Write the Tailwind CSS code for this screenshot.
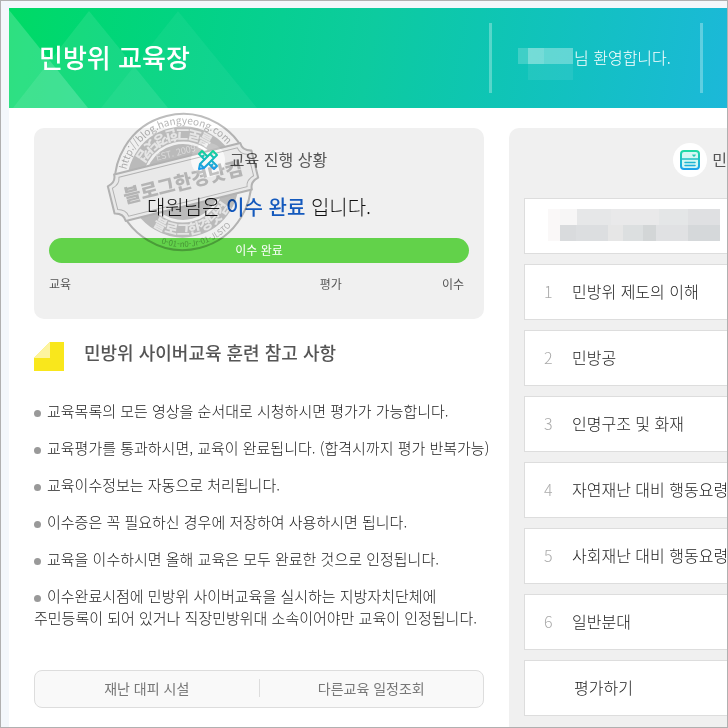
<!DOCTYPE html>
<html lang="ko">

<head>
    <meta charset="UTF-8">
    <meta name="viewport" content="width=device-width, initial-scale=1.0">
    <title>민방위 교육장</title>
    <script src="https://cdn.jsdelivr.net/npm/@tailwindcss/browser@4"></script>
</head>

<body class="font-['Noto_Sans_CJK_KR',sans-serif] bg-white text-[#222] overflow-x-hidden">
    <div class="min-h-screen border border-[#b0b0b0] bg-[#f3f7fb] pt-[7px] pl-2 flex flex-col overflow-hidden">
        <header class="relative h-[100px] shrink-0 flex items-center text-white bg-linear-100 from-[#00da64] via-[#0dcb9f] to-[#1cb8d9]">
            <svg class="absolute left-0 top-0" width="260" height="100" viewBox="0 0 260 100" fill="#fff" aria-hidden="true">
                <path d="M0 2L79 100H0z" fill-opacity=".18" />
                <path d="M80 3L159 100H4z" fill-opacity=".09" />
                <path d="M169 3L248 100H92z" fill-opacity=".05" />
            </svg>
            <h1 class="relative pl-[30px] pb-[2px] text-[26px] leading-[38px] font-medium whitespace-nowrap">민방위 교육장</h1>
            <div class="ml-auto mr-6 w-[214px] h-[70px] shrink-0 border-x-3 border-white/30 flex items-center pl-[26px]">
                <svg class="mt-3" width="55" height="32" viewBox="0 0 55 32" fill="#fff" aria-hidden="true">
                    <path d="M0 0h10v16H0z" fill-opacity=".2" />
                    <path d="M10 0h16v16H10z" fill-opacity=".42" />
                    <path d="M26 0h29v16H26z" fill-opacity=".34" />
                    <path d="M10 16h45v16H10z" fill-opacity=".08" />
                </svg>
                <p class="pl-px pb-[2px] text-base leading-6 font-light whitespace-nowrap">님 환영합니다.</p>
            </div>
        </header>

        <main class="grow flex gap-[25px] pl-[25px] pt-5 bg-white">
            <div class="w-[450px] shrink-0">
                <section class="relative rounded-[10px] bg-[#f0f0f0] px-[15px] pt-[15px] pb-6 h-[191px]">
                    <div class="flex items-center justify-center gap-[5px] h-[34px]">
                        <span class="size-[34px] rounded-full bg-white flex items-center justify-center">
                            <svg class="relative z-10" width="22" height="22" viewBox="0 0 22 22" fill="none" stroke="url(#tool)" stroke-width="2" stroke-linejoin="round" aria-hidden="true">
                                <defs>
                                    <linearGradient id="tool" x1="0" y1="0" x2="0" y2="22" gradientUnits="userSpaceOnUse">
                                        <stop stop-color="#10dc90" />
                                        <stop offset="1" stop-color="#1c92f2" />
                                    </linearGradient>
                                </defs>
                                <path d="M8 11L2 5l3-3 6 6M14 11l6 6-3 3-6-6M5 8l2-2M14 17l2-2" />
                                <path d="M16 2l4 4L7 19l-5 1 1-5zM13 5l4 4M3 15l4 4" />
                            </svg>
                        </span>
                        <h2 class="pb-[2px] text-base leading-6 text-[#555]">교육 진행 상황</h2>
                    </div>
                    <p class="mt-[15px] text-xl leading-[30px] font-light text-center text-[#111]">대원님은 <strong class="font-medium text-[#1459bd]">이수 완료</strong> 입니다.</p>
                    <div class="mt-4 h-[25px] rounded-full bg-[#62d24a] text-xs leading-[24px] text-white text-center">이수 완료</div>
                    <div class="mt-3 flex gap-[100px] pr-[5px] text-xs leading-[18px] text-[#555]">
                        <span class="mr-auto">교육</span>
                        <span>평가</span>
                        <span>이수</span>
                    </div>

                    <!-- 블로그 스탬프 -->
                    <svg class="absolute left-[70px] top-[-18px] mix-blend-multiply" width="158" height="144" viewBox="-79 -72 158 144" fill="none" stroke="#bdbdbd" aria-hidden="true">
                        <defs>
                            <path id="arcUrl" d="M-58 0A58 58 0 0 1 58 0" />
                            <path id="arcTop" d="M53 0A53 53 0 0 0 -53 0" />
                            <path id="arcBottom" d="M-53 0A53 53 0 0 0 53 0" />
                            <path id="arcLow" d="M-65 0A65 65 0 0 0 65 0" />
                        </defs>
                        <g transform="rotate(-14)">
                            <circle r="68" stroke-width="2" />
                            <circle r="48" stroke="#c6c6c6" stroke-width="15" />
                            <circle r="38" fill="#c6c6c6" stroke="none" />
                            <g stroke="none" text-anchor="middle">
                                <text font-size="10" fill="#b5b5b5"><textPath href="#arcUrl" startOffset="50%">http://blog.hangyeong.com</textPath></text>
                                <text font-size="14" font-weight="900" fill="#f4f4f4"><textPath href="#arcTop" startOffset="50%">블로그한경닷컴</textPath></text>
                                <text font-size="14" font-weight="900" fill="#f4f4f4"><textPath href="#arcBottom" startOffset="50%">블로그한경닷컴</textPath></text>
                                <text font-size="8" fill="#b5b5b5"><textPath href="#arcLow" startOffset="50%">0-01-n0-Jr-01-JLSTO</textPath></text>
                                <text font-size="9" fill="#e8e8e8" y="-27">EST. 2009</text>
                            </g>
                            <path d="M-65 -24H65Q65 -16 74 -14V14Q65 16 65 24H-65Q-65 16 -74 14V-14Q-65 -16 -65 -24z" fill="#f0f0f0" stroke="none" style="mix-blend-mode: normal" />
                            <path d="M-65 -24H65Q65 -16 74 -14V14Q65 16 65 24H-65Q-65 16 -74 14V-14Q-65 -16 -65 -24z" fill="#fff" fill-opacity=".5" stroke-width="2" stroke-linejoin="round" />
                            <path d="M-61 -20H61Q62 -13 70 -11V11Q62 13 61 20H-61Q-62 13 -70 11V-11Q-62 -13 -61 -20z" />
                            <text font-size="19" font-weight="900" fill="#c0c0c0" stroke="none" text-anchor="middle" y="7">블로그한경닷컴</text>
                        </g>
                    </svg>
                </section>

                <section>
                    <div class="mt-5 flex items-start gap-5">
                        <svg class="mt-[3px]" width="30" height="29" viewBox="0 0 30 29" aria-hidden="true">
                            <path d="M0 16L16 0h14v29H0z" fill="#f9e71c" />
                            <path d="M0 16L16 0v16z" fill="#fdf4a0" />
                        </svg>
                        <h2 class="text-lg leading-[26px] font-medium text-[#555]">민방위 사이버교육 훈련 참고 사항</h2>
                    </div>
                    <ul class="mt-[29px] space-y-[15px] text-[15px] leading-[22px] font-light whitespace-nowrap">
                        <li><span class="inline-block size-[7px] rounded-full bg-[#999] mr-[6px]"></span>교육목록의 모든 영상을 순서대로 시청하시면 평가가 가능합니다.</li>
                        <li><span class="inline-block size-[7px] rounded-full bg-[#999] mr-[6px]"></span>교육평가를 통과하시면, 교육이 완료됩니다. (합격시까지 평가 반복가능)</li>
                        <li><span class="inline-block size-[7px] rounded-full bg-[#999] mr-[6px]"></span>교육이수정보는 자동으로 처리됩니다.</li>
                        <li><span class="inline-block size-[7px] rounded-full bg-[#999] mr-[6px]"></span>이수증은 꼭 필요하신 경우에 저장하여 사용하시면 됩니다.</li>
                        <li><span class="inline-block size-[7px] rounded-full bg-[#999] mr-[6px]"></span>교육을 이수하시면 올해 교육은 모두 완료한 것으로 인정됩니다.</li>
                        <li><span class="inline-block size-[7px] rounded-full bg-[#999] mr-[6px]"></span>이수완료시점에 민방위 사이버교육을 실시하는 지방자치단체에<br>주민등록이 되어 있거나 직장민방위대 소속이어야만 교육이 인정됩니다.</li>
                    </ul>
                </section>

                <nav class="mt-[41px] mb-[19px] h-[38px] flex items-center rounded-lg border border-[#ddd] bg-[#f9f9f9] pb-[2px] text-sm leading-[18px] text-[#777] text-center">
                    <a href="#" class="flex-1 border-r border-[#ddd]">재난 대피 시설</a>
                    <a href="#" class="flex-1">다른교육 일정조회</a>
                </nav>
            </div>

            <section class="grow basis-0 min-w-0 rounded-tl-[10px] bg-[#f0f0f0] pl-[15px] pt-[15px]">
                <div class="flex items-center justify-end gap-[5px] h-[34px]">
                    <span class="size-[34px] rounded-full bg-white flex items-center justify-center">
                        <svg width="20" height="20" viewBox="0 0 20 20" fill="none" stroke="url(#list)" stroke-width="2" stroke-linecap="round" aria-hidden="true">
                            <defs>
                                <linearGradient id="list" x1="0" y1="0" x2="0" y2="20" gradientUnits="userSpaceOnUse">
                                    <stop stop-color="#1fdca0" />
                                    <stop offset="1" stop-color="#1c9fee" />
                                </linearGradient>
                            </defs>
                            <rect x="1" y="1" width="18" height="18" rx="3" fill="#d4f7f3" />
                            <path d="M2 9H18M5 12.500H15M5 15.500H15" stroke-width="1.500" />
                            <path d="M13 5l1 1 1-1" stroke-width="1.500" />
                        </svg>
                    </span>
                    <h2 class="pb-[2px] text-base leading-6 text-[#555]">민</h2>
                </div>
                <ol class="mt-[21px] space-y-[10px] text-base leading-6 font-light whitespace-nowrap">
                    <li class="h-14 border border-r-0 border-[#ddd] bg-white flex items-center pl-[23px] overflow-hidden">
                        <svg class="mt-[-4px]" width="172" height="34" viewBox="0 0 172 34" aria-hidden="true">
                            <path d="M0 2h12v32H0z" fill="#faf8f8" />
                            <path d="M12 2h17v16H12z" fill="#f7f6f6" />
                            <path d="M29 2h34v16H29z" fill="#e6e7e8" />
                            <path d="M63 2h48v16H63z" fill="#e9e9ea" />
                            <path d="M111 2h29v16H111z" fill="#e4e6e7" />
                            <path d="M140 2h32v16H140z" fill="#dfe0e2" />
                            <path d="M12 18h16v16H12z" fill="#d9dbdd" />
                            <path d="M28 18h32v16H28z" fill="#dcdee0" />
                            <path d="M60 18h15v16H60z" fill="#e6e6e6" />
                            <path d="M75 18h20v16H75z" fill="#dcdfe0" />
                            <path d="M95 18h13v16H95z" fill="#d3d6d7" />
                            <path d="M108 18h32v16H108z" fill="#e0e1e3" />
                            <path d="M140 18h32v16H140z" fill="#d5d8da" />
                        </svg>
                    </li>
                    <li class="h-14 border border-r-0 border-[#ddd] bg-white flex items-center pl-[19px] pb-[2px] overflow-hidden"><span class="w-7 shrink-0 text-[#aaa]">1</span><a href="#">민방위 제도의 이해</a></li>
                    <li class="h-14 border border-r-0 border-[#ddd] bg-white flex items-center pl-[19px] pb-[2px] overflow-hidden"><span class="w-7 shrink-0 text-[#aaa]">2</span><a href="#">민방공</a></li>
                    <li class="h-14 border border-r-0 border-[#ddd] bg-white flex items-center pl-[19px] pb-[2px] overflow-hidden"><span class="w-7 shrink-0 text-[#aaa]">3</span><a href="#">인명구조 및 화재</a></li>
                    <li class="h-14 border border-r-0 border-[#ddd] bg-white flex items-center pl-[19px] pb-[2px] overflow-hidden"><span class="w-7 shrink-0 text-[#aaa]">4</span><a href="#">자연재난 대비 행동요령</a></li>
                    <li class="h-14 border border-r-0 border-[#ddd] bg-white flex items-center pl-[19px] pb-[2px] overflow-hidden"><span class="w-7 shrink-0 text-[#aaa]">5</span><a href="#">사회재난 대비 행동요령</a></li>
                    <li class="h-14 border border-r-0 border-[#ddd] bg-white flex items-center pl-[19px] pb-[2px] overflow-hidden"><span class="w-7 shrink-0 text-[#aaa]">6</span><a href="#">일반분대</a></li>
                    <li class="h-14 border border-r-0 border-[#ddd] bg-white flex items-center pl-[49px] pb-[2px] overflow-hidden"><a href="#">평가하기</a></li>
                </ol>
            </section>
        </main>
    </div>
</body>

</html>
